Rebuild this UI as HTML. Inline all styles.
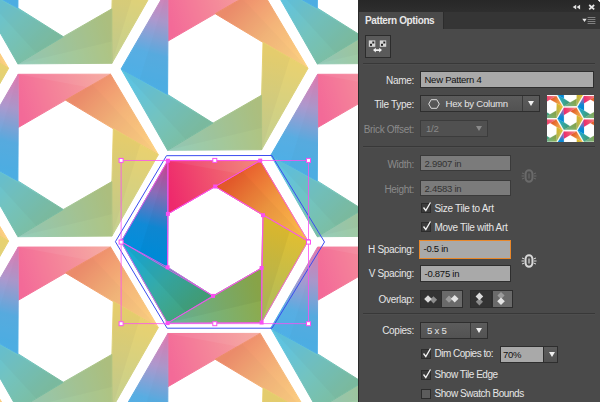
<!DOCTYPE html>
<html><head><meta charset="utf-8"><title>Pattern Options</title>
<style>
html,body{margin:0;padding:0}
body{width:600px;height:402px;overflow:hidden;position:relative;background:#fff;font-family:"Liberation Sans",sans-serif;font-size:10px;letter-spacing:-0.3px;color:#e6e6e6}
#cv{position:absolute;left:0;top:0}
#panel{position:absolute;left:358px;top:0;width:242px;height:402px;background:#4a4a4a;border-left:1px solid #2a2a2a;box-sizing:border-box}
.abs{position:absolute}
.lbl{position:absolute;right:186px;margin-top:1px;text-align:right;white-space:nowrap;line-height:12px}
.dim{color:#8a8a8a}
.fld{position:absolute;box-sizing:border-box;background:#a9a9a9;border:1px solid #2e2e2e;color:#111;line-height:16px;padding-left:3.500px;white-space:nowrap;font-size:9.500px;letter-spacing:-0.250px}
.fld.dis{background:#7b7b7b;color:#333;border-color:#3a3a3a}
.dd{position:absolute;box-sizing:border-box;background:linear-gradient(#5c5c5c,#525252);border:1px solid #2e2e2e;color:#e6e6e6;line-height:16px;white-space:nowrap;font-size:9.600px;letter-spacing:-0.250px}
.dd.dis{background:#505050;color:#8a8a8a;border-color:#3c3c3c}
.dd .arr{position:absolute;right:0;top:0;bottom:0;width:16px;border-left:1px solid #3a3a3a}
.dd .arr:after{content:"";position:absolute;left:5px;top:5px;border-left:3.5px solid transparent;border-right:3.5px solid transparent;border-top:5px solid #f0f0f0}
.dd.dis .arr:after{border-top-color:#8a8a8a}
.dd.dis .arr{border-left-color:transparent}
.cb{position:absolute;left:61.500px;width:10.500px;height:10px;box-sizing:border-box;background:#3c3c3c;border:1px solid #2c2c2c}
.cb.off{background:#5c5c5c}
.cbt{position:absolute;left:75.500px;margin-top:0.600px;white-space:nowrap;line-height:12px}
.sep{position:absolute;left:4px;right:5px;height:1px;background:#383838;border-bottom:1px solid #4e4e4e}
.ob{position:absolute;top:289.500px;width:21.500px;height:18.500px;box-sizing:border-box;border:1px solid #2e2e2e;background:#6a6a6a}
.ob.on{background:#333}
</style></head><body>
<svg id="cv" width="358" height="402" viewBox="0 0 358 402">
<defs>
<linearGradient id="gr" gradientUnits="userSpaceOnUse" x1="-46.7" y1="-54.3" x2="45.6" y2="-81.0"><stop offset="0" stop-color="#ee2a6c"/><stop offset="1" stop-color="#f28472"/></linearGradient>
<linearGradient id="go" gradientUnits="userSpaceOnUse" x1="23.1" y1="-68.0" x2="93.4" y2="-0.5"><stop offset="0" stop-color="#e85c2c"/><stop offset="0.45" stop-color="#f09640"/><stop offset="1" stop-color="#fcc24c"/></linearGradient>
<linearGradient id="gy" gradientUnits="userSpaceOnUse" x1="70.9" y1="-13.4" x2="47.0" y2="80.9"><stop offset="0" stop-color="#e2be30"/><stop offset="1" stop-color="#a8bc62"/></linearGradient>
<linearGradient id="gg" gradientUnits="userSpaceOnUse" x1="47.0" y1="53.7" x2="-47.0" y2="81.5"><stop offset="0" stop-color="#8eaa4a"/><stop offset="1" stop-color="#66b8a0"/></linearGradient>
<linearGradient id="gt" gradientUnits="userSpaceOnUse" x1="-24.3" y1="67.9" x2="-93.5" y2="0.1"><stop offset="0" stop-color="#44a27a"/><stop offset="0.4" stop-color="#36aaa6"/><stop offset="0.75" stop-color="#1eaace"/><stop offset="1" stop-color="#10acd8"/></linearGradient>
<linearGradient id="gb" gradientUnits="userSpaceOnUse" x1="-70.2" y1="12.9" x2="-46.7" y2="-80.9"><stop offset="0" stop-color="#008edc"/><stop offset="0.3" stop-color="#108ad6"/><stop offset="0.65" stop-color="#8a6cb8"/><stop offset="1" stop-color="#d4408c"/></linearGradient>

<g id="art">
<polygon points="-46.7,-80.9 45.6,-81.0 0.6,-55.1 -46.7,-27.7" fill="url(#gr)" stroke="url(#gr)" stroke-width="1" stroke-linejoin="round"/>
<polygon points="45.6,-81.0 93.4,-0.5 48.4,-26.4 0.6,-55.1" fill="url(#go)" stroke="url(#go)" stroke-width="1" stroke-linejoin="round"/>
<polygon points="93.4,-0.5 47.0,80.9 47.0,26.4 48.4,-26.4" fill="url(#gy)" stroke="url(#gy)" stroke-width="1" stroke-linejoin="round"/>
<polygon points="47.0,80.9 -47.0,81.5 -1.6,54.3 47.0,26.4" fill="url(#gg)" stroke="url(#gg)" stroke-width="1" stroke-linejoin="round"/>
<polygon points="-47.0,81.5 -93.5,0.1 -47.0,25.7 -1.6,54.3" fill="url(#gt)" stroke="url(#gt)" stroke-width="1" stroke-linejoin="round"/>
<polygon points="-93.5,0.1 -46.7,-80.9 -46.7,-27.7 -47.0,25.7" fill="url(#gb)" stroke="url(#gb)" stroke-width="1" stroke-linejoin="round"/>
<polygon points="-46.7,-80.9 45.6,-81.0 23.1,-68.0" fill="#fff" fill-opacity="0.06"/>
<polygon points="93.4,-0.5 0.6,-55.1 27.6,-70.6" fill="#000" fill-opacity="0.025"/>
<polygon points="47.0,80.9 48.4,-26.4 75.4,-10.9" fill="#000" fill-opacity="0.04"/>
<polygon points="-47.0,81.5 47.0,26.4 47.0,59.1" fill="#000" fill-opacity="0.04"/>
<polygon points="-93.5,0.1 -1.6,54.3 -28.8,70.6" fill="#000" fill-opacity="0.04"/>
<polygon points="-46.7,-80.9 -47.0,25.7 -74.9,10.3" fill="#000" fill-opacity="0.025"/>

</g>
</defs>
<g opacity="0.7">
<use href="#art" x="-84.8" y="68.8"/>
<use href="#art" x="-84.8" y="241.6"/>
<use href="#art" x="-84.8" y="414.4"/>
<use href="#art" x="64.9" y="-17.6"/>
<use href="#art" x="64.9" y="155.2"/>
<use href="#art" x="64.9" y="328.0"/>
<use href="#art" x="214.6" y="68.8"/>
<use href="#art" x="214.6" y="414.4"/>
<use href="#art" x="364.3" y="-17.6"/>
<use href="#art" x="364.3" y="155.2"/>
<use href="#art" x="364.3" y="328.0"/>

</g>
<use href="#art" x="214.6" y="241.6"/>
<polygon points="115.4,241.7 166.5,155.7 271.8,155.5 324.5,242.0 272.0,328.2 167.1,328.2" fill="none" stroke="#3a4cf0" stroke-width="1"/>
<rect x="121.1" y="160.4" width="187.4" height="163.3" fill="none" stroke="#fa50f2" stroke-width="0.8"/>
<polygon points="-46.7,-80.9 45.6,-81.0 -46.7,-27.7" fill="none" stroke="#fa50f2" stroke-width="0.8" transform="translate(214.6,241.6)"/>
<polygon points="45.6,-81.0 93.4,-0.5 0.6,-55.1" fill="none" stroke="#fa50f2" stroke-width="0.8" transform="translate(214.6,241.6)"/>
<polygon points="93.4,-0.5 47.0,80.9 48.4,-26.4" fill="none" stroke="#fa50f2" stroke-width="0.8" transform="translate(214.6,241.6)"/>
<polygon points="47.0,80.9 -47.0,81.5 47.0,26.4" fill="none" stroke="#fa50f2" stroke-width="0.8" transform="translate(214.6,241.6)"/>
<polygon points="-47.0,81.5 -93.5,0.1 -1.6,54.3" fill="none" stroke="#fa50f2" stroke-width="0.8" transform="translate(214.6,241.6)"/>
<polygon points="-93.5,0.1 -46.7,-80.9 -47.0,25.7" fill="none" stroke="#fa50f2" stroke-width="0.8" transform="translate(214.6,241.6)"/>
<polygon points="0.6,-55.1 48.4,-26.4 47.0,26.4 -1.6,54.3 -47.0,25.7 -46.7,-27.7" fill="none" stroke="#fa50f2" stroke-width="0.8" transform="translate(214.6,241.6)"/>
<rect x="165.9" y="158.7" width="4" height="4" fill="#fa50f2"/>
<rect x="258.2" y="158.6" width="4" height="4" fill="#fa50f2"/>
<rect x="306.0" y="239.1" width="4" height="4" fill="#fa50f2"/>
<rect x="259.6" y="320.5" width="4" height="4" fill="#fa50f2"/>
<rect x="165.6" y="321.1" width="4" height="4" fill="#fa50f2"/>
<rect x="119.1" y="239.7" width="4" height="4" fill="#fa50f2"/>
<rect x="213.2" y="184.5" width="4" height="4" fill="#fa50f2"/>
<rect x="261.0" y="213.2" width="4" height="4" fill="#fa50f2"/>
<rect x="259.6" y="266.0" width="4" height="4" fill="#fa50f2"/>
<rect x="211.0" y="293.9" width="4" height="4" fill="#fa50f2"/>
<rect x="165.6" y="265.3" width="4" height="4" fill="#fa50f2"/>
<rect x="165.9" y="211.9" width="4" height="4" fill="#fa50f2"/>
<rect x="119.1" y="158.4" width="4" height="4" fill="#fff" stroke="#fa50f2" stroke-width="1"/>
<rect x="119.1" y="240.1" width="4" height="4" fill="#fff" stroke="#fa50f2" stroke-width="1"/>
<rect x="119.1" y="321.7" width="4" height="4" fill="#fff" stroke="#fa50f2" stroke-width="1"/>
<rect x="212.8" y="158.4" width="4" height="4" fill="#fff" stroke="#fa50f2" stroke-width="1"/>
<rect x="212.8" y="321.7" width="4" height="4" fill="#fff" stroke="#fa50f2" stroke-width="1"/>
<rect x="306.5" y="158.4" width="4" height="4" fill="#fff" stroke="#fa50f2" stroke-width="1"/>
<rect x="306.5" y="240.1" width="4" height="4" fill="#fff" stroke="#fa50f2" stroke-width="1"/>
<rect x="306.5" y="321.7" width="4" height="4" fill="#fff" stroke="#fa50f2" stroke-width="1"/>

</svg>
<div id="panel">
 <div class="abs" style="left:0;top:0;width:241px;height:12px;background:linear-gradient(#272727,#2e2e2e)"></div>
 <div class="abs" style="left:0;top:12px;width:241px;height:17px;background:#353535"></div>
 <div class="abs" style="left:0;top:12px;width:84px;height:17px;background:#4a4a4a;border-right:1px solid #2c2c2c"></div>
 <div class="abs" style="left:6px;top:14px;letter-spacing:-0.380px;font-weight:bold;line-height:13px;color:#e8e8e8;white-space:nowrap">Pattern Options</div>
 <svg class="abs" style="left:213px;top:4px" width="25" height="7" viewBox="0 0 25 7"><path d="M4.200 0.800v4.600L0.700 3.100zM8.100 0.800v4.600L4.600 3.100z" fill="#e2e2e2"/><path d="M17.200 1l5 4.400M22.200 1l-5 4.400" stroke="#e6e6e6" stroke-width="1.700" fill="none"/></svg>
 <svg class="abs" style="left:223px;top:16px" width="14" height="10" viewBox="0 0 14 10"><path d="M0.300 2.800h4.400L2.500 6z" fill="#e6e6e6"/><path d="M5.600 1.500h7.800M5.600 3.500h7.800M5.600 5.500h7.800M5.600 7.500h7.800" stroke="#808080" stroke-width="1.200"/></svg>
 <div class="abs" style="left:5.500px;top:35px;width:26.500px;height:22.500px;box-sizing:border-box;background:#5a5a5a;border:1px solid #2c2c2c"></div>
 <svg class="abs" style="left:9px;top:39px" width="20" height="15" viewBox="0 0 20 15"><rect x="0.800" y="1.400" width="6.500" height="6.400" fill="#d6d6d6"/><rect x="11.800" y="1.400" width="6.400" height="6.400" fill="#d6d6d6"/><rect x="2" y="4.800" width="2" height="2" fill="#222"/><rect x="4.300" y="2.500" width="2" height="2" fill="#222"/><rect x="13" y="4.800" width="2" height="2" fill="#222"/><rect x="15.300" y="2.500" width="2" height="2" fill="#222"/><path d="M5 11.100l2.800-2.300v1.500h3.400v-1.500l2.800 2.300l-2.800 2.300v-1.500h-3.400v1.500z" fill="#f2f2f2"/></svg>
 <div class="sep" style="top:63px"></div>

 <div class="lbl" style="top:74px">Name:</div>
 <div class="fld" style="left:61px;top:71px;width:174px;height:17px">New Pattern 4</div>

 <div class="lbl" style="top:98px">Tile Type:</div>
 <div class="dd" style="left:61px;top:95px;width:120px;height:17px"><svg class="abs" style="left:7px;top:3px" width="12" height="10" viewBox="0 0 12 10"><polygon points="0.7,5 3.2,0.7 8.800,0.7 11.300,5 8.800,9.300 3.200,9.300" fill="none" stroke="#ddd" stroke-width="1"/></svg><span class="abs" style="left:24.500px;top:0">Hex by Column</span><span class="arr"></span></div>
 <svg class="abs" style="left:188px;top:95px" width="47" height="47" viewBox="0 0 46.5 46.5"><rect width="46.5" height="46.5" fill="#fff"/><g style="filter:blur(0.35px)">
<use href="#art" transform="translate(-16.80,-23.30) scale(0.1345)"/>
<use href="#art" transform="translate(-16.80,0.10) scale(0.1345)"/>
<use href="#art" transform="translate(-16.80,23.50) scale(0.1345)"/>
<use href="#art" transform="translate(-16.80,46.90) scale(0.1345)"/>
<use href="#art" transform="translate(-16.80,70.30) scale(0.1345)"/>
<use href="#art" transform="translate(3.10,-11.60) scale(0.1345)"/>
<use href="#art" transform="translate(3.10,11.80) scale(0.1345)"/>
<use href="#art" transform="translate(3.10,35.20) scale(0.1345)"/>
<use href="#art" transform="translate(3.10,58.60) scale(0.1345)"/>
<use href="#art" transform="translate(3.10,82.00) scale(0.1345)"/>
<use href="#art" transform="translate(23.00,-23.30) scale(0.1345)"/>
<use href="#art" transform="translate(23.00,0.10) scale(0.1345)"/>
<use href="#art" transform="translate(23.00,23.50) scale(0.1345)"/>
<use href="#art" transform="translate(23.00,46.90) scale(0.1345)"/>
<use href="#art" transform="translate(23.00,70.30) scale(0.1345)"/>
<use href="#art" transform="translate(42.90,-11.60) scale(0.1345)"/>
<use href="#art" transform="translate(42.90,11.80) scale(0.1345)"/>
<use href="#art" transform="translate(42.90,35.20) scale(0.1345)"/>
<use href="#art" transform="translate(42.90,58.60) scale(0.1345)"/>
<use href="#art" transform="translate(42.90,82.00) scale(0.1345)"/>
<use href="#art" transform="translate(62.80,-23.30) scale(0.1345)"/>
<use href="#art" transform="translate(62.80,0.10) scale(0.1345)"/>
<use href="#art" transform="translate(62.80,23.50) scale(0.1345)"/>
<use href="#art" transform="translate(62.80,46.90) scale(0.1345)"/>
<use href="#art" transform="translate(62.80,70.30) scale(0.1345)"/>
</g>
 </svg>

 <div class="lbl dim" style="top:123px">Brick Offset:</div>
 <div class="dd dis" style="left:61px;top:120px;width:68px;height:17px"><span class="abs" style="left:5px;top:0">1/2</span><span class="arr"></span></div>

 <div class="sep" style="top:146px"></div>

 <div class="lbl dim" style="top:158px">Width:</div>
 <div class="fld dis" style="left:61px;top:155px;width:91px;height:16px">2.9907 in</div>
 <div class="lbl dim" style="top:183px">Height:</div>
 <div class="fld dis" style="left:61px;top:180px;width:91px;height:16px">2.4583 in</div>
 <svg class="abs" style="left:161.500px;top:169px" width="16" height="14" viewBox="0 0 16 14"><g stroke="#6a6a6a" fill="none"><rect x="4.600" y="1.300" width="6.800" height="11.400" rx="3.400" stroke-width="1.900"/><path d="M8 4.500v5" stroke-width="1.200"/><path d="M1 4l2.500 1M1 10l2.500-1M0.5 7h3M15 4l-2.500 1M15 10l-2.500-1M15.500 7h-3" stroke-width="1"/></g></svg>

 <div class="cb" style="top:203px"></div><svg class="abs" style="left:62px;top:200px" width="13" height="13" viewBox="0 0 13 13"><path d="M2.500 7.500l2.300 3L9.500 2.500" stroke="#f4f4f4" stroke-width="1.300" fill="none"/></svg>
 <div class="cbt" style="top:202px">Size Tile to Art</div>
 <div class="cb" style="top:222px"></div><svg class="abs" style="left:62px;top:219px" width="13" height="13" viewBox="0 0 13 13"><path d="M2.500 7.500l2.300 3L9.500 2.500" stroke="#f4f4f4" stroke-width="1.300" fill="none"/></svg>
 <div class="cbt" style="top:221px">Move Tile with Art</div>

 <div class="lbl" style="top:243px">H Spacing:</div>
 <div class="fld" style="left:60px;top:239.500px;width:92px;height:19px;border:1.500px solid #e8872a;line-height:16px">-0.5 in</div>
 <div class="lbl" style="top:267px">V Spacing:</div>
 <div class="fld" style="left:61px;top:264.500px;width:91px;height:17px">-0.875 in</div>
 <svg class="abs" style="left:161.500px;top:254px" width="16" height="14" viewBox="0 0 16 14"><g stroke="#d8d8d8" fill="none"><rect x="4.600" y="1.300" width="6.800" height="11.400" rx="3.400" stroke-width="1.900"/><path d="M8 4.500v5" stroke-width="1.200"/><path d="M1 4l2.500 1M1 10l2.500-1M0.5 7h3M15 4l-2.500 1M15 10l-2.500-1M15.500 7h-3" stroke-width="1"/></g></svg>

 <div class="lbl" style="top:292.500px">Overlap:</div>
 <div class="ob on" style="left:61px"></div><div class="ob" style="left:82px"></div>
 <div class="ob on" style="left:111px"></div><div class="ob" style="left:132.500px"></div>
 <svg class="abs" style="left:61px;top:289.500px" width="94" height="19" viewBox="0 0 94 19"><polygon points="13.5,6.2 17.1,9.8 13.5,13.4 9.9,9.8" fill="#8c8c8c"/><polygon points="8.0,5.2 11.8,9.0 8.0,12.8 4.2,9.0" fill="#dcdcdc"/><polygon points="29.0,5.6 32.6,9.2 29.0,12.8 25.4,9.2" fill="#9a9a9a"/><polygon points="34.7,5.0 38.5,8.8 34.7,12.6 30.9,8.8" fill="#e4e4e4"/><polygon points="59.4,8.2 63.0,11.8 59.4,15.4 55.8,11.8" fill="#8c8c8c"/><polygon points="59.4,2.6 63.2,6.4 59.4,10.2 55.6,6.4" fill="#dcdcdc"/><polygon points="81.0,2.0 84.6,5.6 81.0,9.2 77.4,5.6" fill="#9a9a9a"/><polygon points="81.0,7.4 84.8,11.2 81.0,15.0 77.2,11.2" fill="#e4e4e4"/></svg>

 <div class="sep" style="top:313px"></div>

 <div class="lbl" style="top:324px">Copies:</div>
 <div class="dd" style="left:61px;top:321.500px;width:68px;height:17px"><span class="abs" style="left:6px;top:0">5 x 5</span><span class="arr"></span></div>

 <div class="cb" style="top:349px"></div><svg class="abs" style="left:62px;top:346px" width="13" height="13" viewBox="0 0 13 13"><path d="M2.500 7.500l2.300 3L9.500 2.500" stroke="#f4f4f4" stroke-width="1.300" fill="none"/></svg>
 <div class="cbt" style="top:347.500px;letter-spacing:-0.500px">Dim Copies to:</div>
 <div class="fld" style="left:141px;top:346px;width:44px;height:17px;padding-left:2px">70%</div>
 <div class="dd" style="left:184px;top:346px;width:15px;height:17px"><span class="arr" style="border-left:none;width:13px"></span></div>

 <div class="cb" style="top:370px"></div><svg class="abs" style="left:62px;top:367px" width="13" height="13" viewBox="0 0 13 13"><path d="M2.500 7.500l2.300 3L9.500 2.500" stroke="#f4f4f4" stroke-width="1.300" fill="none"/></svg>
 <div class="cbt" style="top:368.500px;letter-spacing:-0.450px">Show Tile Edge</div>
 <div class="cb off" style="top:389px"></div>
 <div class="cbt" style="top:387px;letter-spacing:-0.450px">Show Swatch Bounds</div>
</div>
<div style="position:absolute;right:0;top:0;width:3px;height:3px;background:radial-gradient(circle at 0 100%,transparent 2.600px,#fff 3px)"></div>
</body></html>
